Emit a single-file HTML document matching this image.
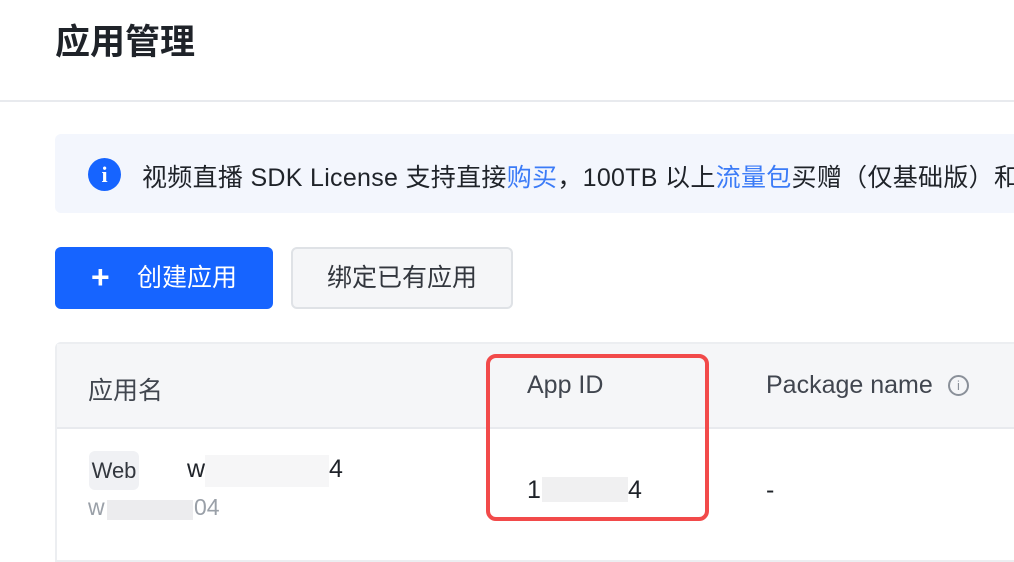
<!DOCTYPE html>
<html><head><meta charset="utf-8"><style>
*{margin:0;padding:0;box-sizing:border-box}
body{width:1014px;height:534px;overflow:hidden;background:#fff;font-family:"Liberation Sans","Noto Sans CJK SC",sans-serif;position:relative;color:#1f2329}
.a{position:absolute;white-space:nowrap}
</style></head><body>
<div class="a" style="left:55px;top:14px;font-size:35px;font-weight:bold;color:#1f2329">应用管理</div>
<div class="a" style="left:0;top:100px;width:1014px;height:2px;background:#e8eaee"></div>
<div class="a" style="left:55px;top:134px;width:980px;height:79px;background:#f3f6fd;border-radius:6px"></div>
<div class="a" style="left:88px;top:158px;width:33px;height:33px;border-radius:50%;background:#1664ff;color:#fff;font-weight:bold;font-size:22px;text-align:center;line-height:33px;font-family:'Liberation Serif',serif">i</div>
<div class="a" style="left:142px;top:158px;font-size:25px;letter-spacing:0.3px;color:#1f2329">视频直播 SDK License 支持直接<span style="color:#3b7bf7">购买</span>，100TB 以上<span style="color:#3b7bf7">流量包</span>买赠（仅基础版）和</div>
<div class="a" style="left:55px;top:247px;width:218px;height:62px;background:#1664ff;border-radius:6px;color:#fff;font-size:25px;line-height:62px"><span style="position:absolute;left:36px;top:-1px;font-size:32px;font-weight:bold">+</span><span style="position:absolute;left:137px;left:82px">创建应用</span></div>
<div class="a" style="left:291px;top:247px;width:222px;height:62px;background:#f5f6f8;border:2px solid #dfe2e6;border-radius:6px;font-size:25px;line-height:58px;text-align:center;color:#33373e">绑定已有应用</div>
<div class="a" style="left:55px;top:342px;width:980px;height:220px;border:2px solid #eceef1;border-radius:6px 0 0 0"></div>
<div class="a" style="left:57px;top:344px;width:960px;height:85px;background:#f5f6f8;border-bottom:2px solid #e8eaee"></div>
<div class="a" style="left:88px;top:371px;font-size:25px;color:#41464f">应用名</div>
<div class="a" style="left:527px;top:371px;font-size:25px;color:#41464f">App ID</div>
<div class="a" style="left:766px;top:371px;font-size:25px;color:#41464f">Package name</div>
<div class="a" style="left:948px;top:375px;width:21px;height:21px;border:2px solid #8a9099;border-radius:50%;font-size:13px;color:#8a9099;text-align:center;line-height:17px">i</div>
<div class="a" style="left:89px;top:451px;width:50px;height:39px;background:#f0f1f4;border-radius:6px;font-size:22px;line-height:39px;text-align:center;color:#33373e">Web</div>
<div class="a" style="left:187px;top:455px;font-size:25px">w</div>
<div class="a" style="left:205px;top:455px;width:124px;height:32px;background:#f6f6f7"></div>
<div class="a" style="left:329px;top:455px;font-size:25px">4</div>
<div class="a" style="left:88px;top:494px;font-size:23px;color:#9aa0a8">w</div>
<div class="a" style="left:107px;top:500px;width:86px;height:20px;background:#ececee"></div>
<div class="a" style="left:194px;top:494px;font-size:23px;color:#9aa0a8">04</div>
<div class="a" style="left:527px;top:476px;font-size:25px">1</div>
<div class="a" style="left:542px;top:477px;width:86px;height:25px;background:#f0f0f1"></div>
<div class="a" style="left:628px;top:476px;font-size:25px">4</div>
<div class="a" style="left:766px;top:476px;font-size:25px">-</div>
<div class="a" style="left:486px;top:354px;width:223px;height:167px;border:4px solid #f24a4a;border-radius:10px"></div>
</body></html>
